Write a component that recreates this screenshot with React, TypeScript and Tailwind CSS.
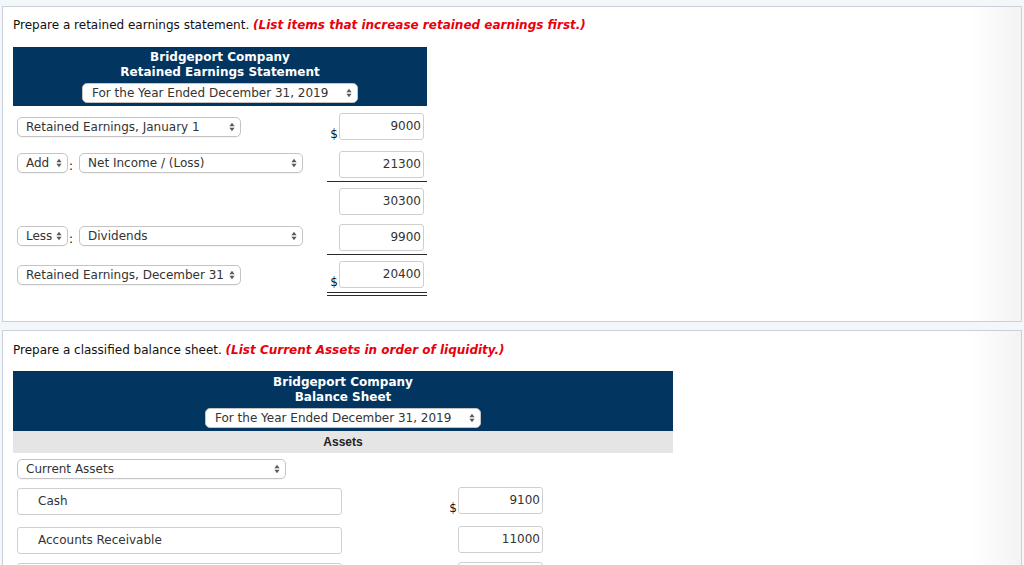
import React from 'react';

const font = "font-['DejaVu_Sans',Verdana,sans-serif]";

const Arrows: React.FC = () => (
    <svg width="6" height="10" viewBox="0 0 6 10" className="shrink-0">
        <path d="M3 0.8 L5.6 4.2 H0.4 Z M3 9.2 L5.6 5.8 H0.4 Z" fill="#5a5a5a" />
    </svg>
);

const Select: React.FC<{ label: string; className?: string }> = ({ label, className = '' }) => (
    <div
        className={`flex h-[20px] shrink-0 items-center justify-between rounded-[5px] border border-[#c4c4c4] bg-white pl-[8px] pr-[5px] text-[12px] leading-[15px] text-[#333] shadow-[0_1px_0_rgba(0,0,0,0.04)] ${className}`}
    >
        <span className="whitespace-nowrap">{label}</span>
        <Arrows />
    </div>
);

const Amount: React.FC<{ value?: string }> = ({ value = '' }) => (
    <div className="flex h-[27px] w-[85px] shrink-0 items-center justify-end rounded-[3px] border border-[#cfcfcf] bg-white pr-[2px] text-[12px] leading-[15px] text-[#333]">
        {value}
    </div>
);

const Dollar: React.FC = () => <span className="self-end pr-[1px] text-[12px] leading-[12px] font-medium text-[#111]">$</span>;

const Header: React.FC<{ title: string; className?: string }> = ({ title, className = '' }) => (
    <div className={`flex flex-col items-center bg-[#033561] pb-[3px] text-[12px] leading-[15px] font-bold text-white ${className}`}>
        <div>Bridgeport Company</div>
        <div>{title}</div>
        <Select label="For the Year Ended December 31, 2019" className="mt-[3px] w-[276px] pl-[9px] font-normal" />
    </div>
);

export default function App() {
    return (
        <div className={`h-[565px] w-full overflow-hidden bg-[#f4f7fa] px-[2px] pt-[6px] ${font}`}>
            {/* Retained earnings statement */}
            <div className="h-[316px] border border-[#c8d0dc] bg-linear-to-r from-white from-95% to-[#f3f3f3] pl-[10px] pt-[11px]">
                <p className="text-[12px] leading-[15px] text-[#111]">
                    Prepare a retained earnings statement.{' '}
                    <span className="font-bold italic text-[#e8000b]">(List items that increase retained earnings first.)</span>
                </p>
                <div className="mt-[14px] w-[414px]">
                    <Header title="Retained Earnings Statement" className="pt-[3px]" />

                    <div className="mt-[7px] flex">
                        <div className="flex-1 pl-[4px] pt-[4px]">
                            <Select label="Retained Earnings, January 1" className="w-[224px]" />
                        </div>
                        <div className="flex w-[100px] justify-end pr-[3px]">
                            <Dollar />
                            <Amount value="9000" />
                        </div>
                    </div>

                    <div className="mt-[11px] flex">
                        <div className="flex flex-1 items-start pl-[4px] pt-[2px]">
                            <Select label="Add" className="w-[51px]" />
                            <span className="ml-[1px] mr-[6px] mt-[6px] text-[12px] leading-[15px] text-[#111]">:</span>
                            <Select label="Net Income / (Loss)" className="w-[224px]" />
                        </div>
                        <div className="flex w-[100px] justify-end border-b border-[#2a2a2a] pb-[3px] pr-[3px]">
                            <Amount value="21300" />
                        </div>
                    </div>

                    <div className="mt-[6px] flex justify-end">
                        <div className="flex w-[100px] justify-end pr-[3px]">
                            <Amount value="30300" />
                        </div>
                    </div>

                    <div className="mt-[9px] flex">
                        <div className="flex flex-1 items-start pl-[4px] pt-[2px]">
                            <Select label="Less" className="w-[51px]" />
                            <span className="ml-[1px] mr-[6px] mt-[6px] text-[12px] leading-[15px] text-[#111]">:</span>
                            <Select label="Dividends" className="w-[224px]" />
                        </div>
                        <div className="flex w-[100px] justify-end border-b border-[#2a2a2a] pb-[3px] pr-[3px]">
                            <Amount value="9900" />
                        </div>
                    </div>

                    <div className="mt-[6px] flex">
                        <div className="flex-1 pl-[4px] pt-[4px]">
                            <Select label="Retained Earnings, December 31" className="w-[224px]" />
                        </div>
                        <div className="flex w-[100px] flex-col">
                            <div className="flex justify-end pr-[3px]">
                                <Dollar />
                                <Amount value="20400" />
                            </div>
                            <div className="mt-[4px] h-px bg-[#2a2a2a]" />
                            <div className="mt-[2px] h-px bg-[#2a2a2a]" />
                        </div>
                    </div>
                </div>
            </div>

            {/* Classified balance sheet */}
            <div className="mt-[8px] h-[400px] border border-[#c8d0dc] bg-linear-to-r from-white from-95% to-[#f3f3f3] pl-[10px] pt-[12px]">
                <p className="text-[12px] leading-[15px] text-[#111]">
                    Prepare a classified balance sheet.{' '}
                    <span className="font-bold italic text-[#e8000b]">(List Current Assets in order of liquidity.)</span>
                </p>
                <div className="mt-[13px] w-[660px]">
                    <Header title="Balance Sheet" className="pt-[4px]" />
                    <div className="flex h-[22px] items-center justify-center bg-[#e5e5e5] font-['Liberation_Sans',Arial,sans-serif] text-[12px] font-bold text-[#222]">
                        Assets
                    </div>

                    <div className="mt-[6px] pl-[4px]">
                        <Select label="Current Assets" className="w-[269px]" />
                    </div>

                    {[
                        { name: 'Cash', value: '9100', dollar: true, gap: 'mt-[8px]' },
                        { name: 'Accounts Receivable', value: '11000', dollar: false, gap: 'mt-[11px]' },
                        { name: '', value: '', dollar: false, gap: 'mt-[8px]' },
                    ].map((row, i) => (
                        <div key={i} className={`flex items-start pl-[4px] ${row.gap}`}>
                            <div className="mt-[1px] flex h-[27px] w-[325px] items-center rounded-[3px] border border-[#cfcfcf] bg-white pl-[20px] text-[12px] leading-[15px] text-[#333]">
                                {row.name}
                            </div>
                            <div className="flex h-[27px] w-[116px] justify-end">{row.dollar && <Dollar />}</div>
                            <Amount value={row.value} />
                        </div>
                    ))}
                </div>
            </div>
        </div>
    );
}
